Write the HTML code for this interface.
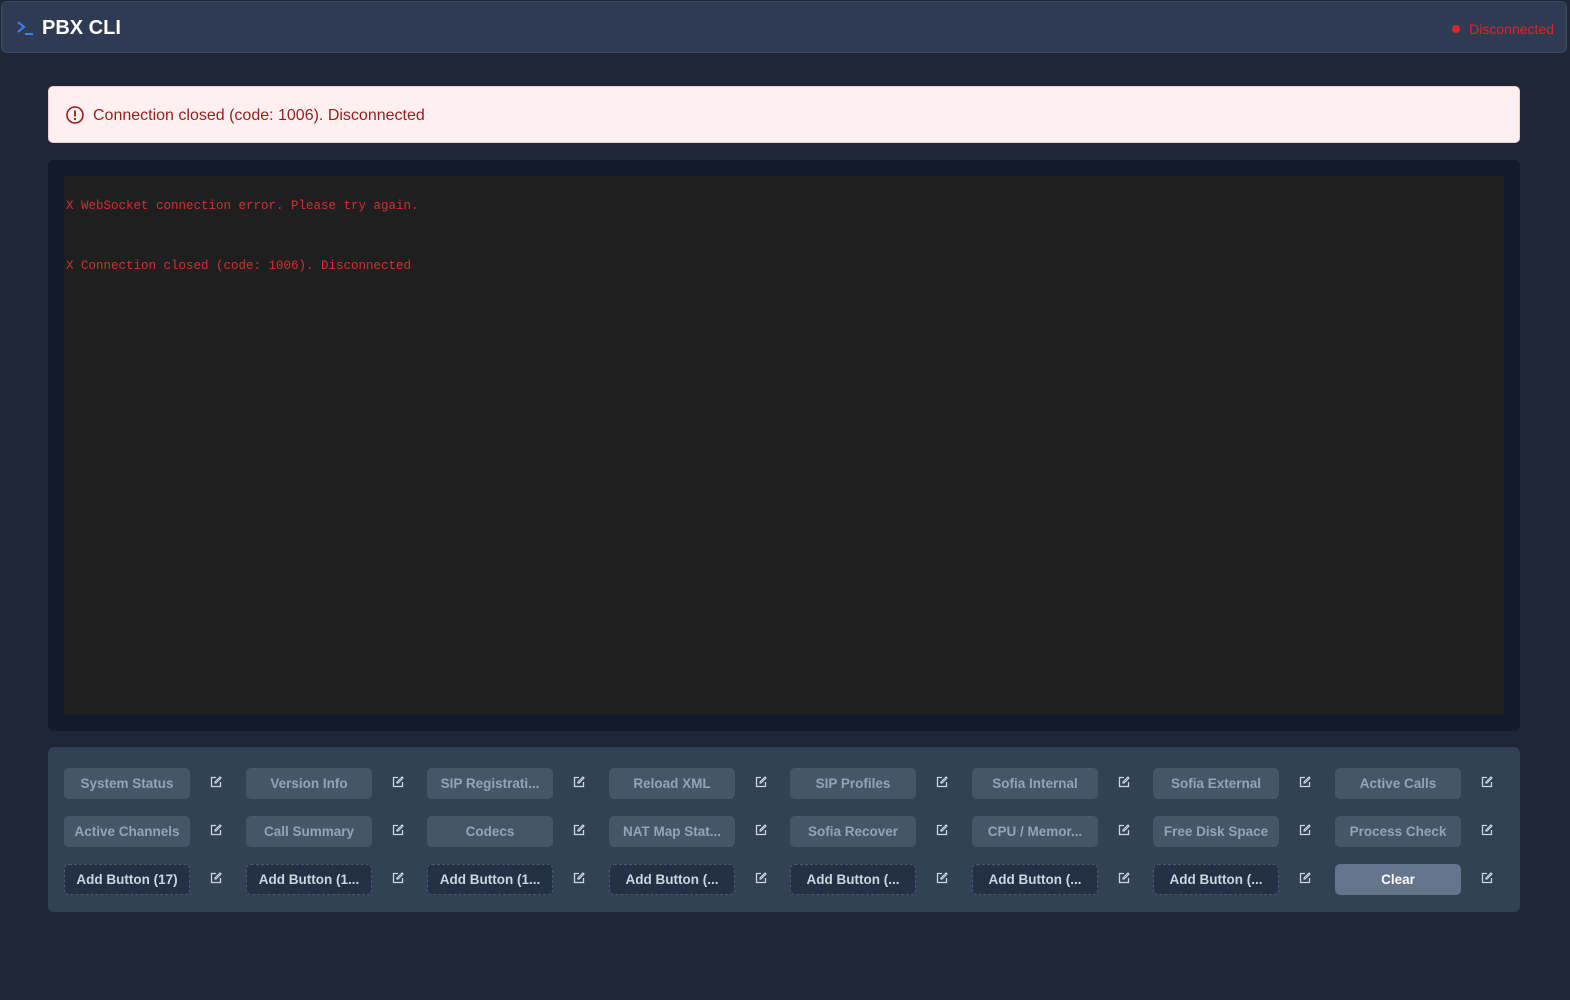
<!DOCTYPE html>
<html><head><meta charset="utf-8"><style>
*{box-sizing:border-box;margin:0;padding:0}
body{width:1570px;height:1000px;background:#1e2638;font-family:"Liberation Sans",sans-serif;position:relative;overflow:hidden}
.hdr{position:absolute;left:1px;top:1px;width:1566px;height:52px;background:#2f3b52;border:1px solid #3d4a62;border-radius:6px}
.hdr .t{position:absolute;left:40px;top:15px;color:#fff;font-weight:bold;font-size:20px}
.hdr .s{position:absolute;right:12px;top:19px;color:#dc2626;font-size:14px}
.hdr .s:before{content:"";display:inline-block;width:8px;height:8px;border-radius:50%;background:#dc2626;margin-right:9px;vertical-align:1px}
.alert{position:absolute;left:48px;top:86px;width:1472px;height:57px;background:#fef0f0;border:1px solid #f7c9c9;border-radius:5px;color:#9b1c1c;font-size:16px}
.alert span{position:absolute;left:44px;top:20px}
.term{position:absolute;left:48px;top:160px;width:1472px;height:571px;background:#131a2b;border-radius:6px}
.term .in{position:absolute;left:16px;top:16px;width:1440px;height:539px;background:#1f1f1f;font-family:"Liberation Mono",monospace;font-size:12.5px;color:#d32f2f}
.term .in div{position:absolute;left:2px}
.panel{position:absolute;left:48px;top:747px;width:1472px;height:165px;background:#334155;border-radius:6px}
.b{position:absolute;width:126px;height:31px;border-radius:5px;background:#475569;color:#94a3b8;font-weight:bold;font-size:13.5px;text-align:center;line-height:31px;white-space:nowrap}
.b.a{background:#243044;border:1px dashed #4b5870;color:#cbd5e1;line-height:29px}
.b.c{background:#64748b;color:#fff}
.e{position:absolute;width:12px;height:12px}
</style></head><body>
<div class="hdr"><svg style="position:absolute;left:14px;top:18px" width="18" height="16" viewBox="0 0 18 16"><path d="M2 2l6 5-6 5" fill="none" stroke="#3b82f6" stroke-width="2"/><path d="M9 14h8" stroke="#3b82f6" stroke-width="2"/></svg><div class="t">PBX CLI</div><div class="s">Disconnected</div></div>
<div class="alert"><svg style="position:absolute;left:17px;top:19px" width="18" height="18" viewBox="0 0 18 18"><circle cx="9" cy="9" r="8" fill="none" stroke="#9b1c1c" stroke-width="1.6"/><path d="M9 4.5v6" stroke="#9b1c1c" stroke-width="1.8"/><circle cx="9" cy="13" r="1.1" fill="#9b1c1c"/></svg><span>Connection closed (code: 1006). Disconnected</span></div>
<div class="term"><div class="in"><div style="top:23px">X WebSocket connection error. Please try again.</div><div style="top:83px">X Connection closed (code: 1006). Disconnected</div></div></div>
<div class="panel" id="p"></div>
<script>
var rows=[["System Status","Version Info","SIP Registrati...","Reload XML","SIP Profiles","Sofia Internal","Sofia External","Active Calls"],["Active Channels","Call Summary","Codecs","NAT Map Stat...","Sofia Recover","CPU / Memor...","Free Disk Space","Process Check"],["Add Button (17)","Add Button (1...","Add Button (1...","Add Button (...","Add Button (...","Add Button (...","Add Button (...","Clear"]];
var h="";var xs=[16,198,379,561,742,924,1105,1287];
rows.forEach(function(r,i){r.forEach(function(t,j){var y=21+i*48;var cls=i==2?(j==7?"b c":"b a"):"b";h+='<div class="'+cls+'" style="left:'+xs[j]+'px;top:'+y+'px">'+t+'</div>';h+='<svg class="e" style="left:'+(xs[j]+146)+'px;top:'+(y+8)+'px" viewBox="0 0 12 12"><path d="M6 1.5H1.5v9h9V6" fill="none" stroke="#cbd5e1" stroke-width="1.3"/><path d="M10 1l1 1-5 5H5V6z" fill="none" stroke="#cbd5e1" stroke-width="1.2"/></svg>';});});
document.getElementById("p").innerHTML=h;
</script>
</body></html>
